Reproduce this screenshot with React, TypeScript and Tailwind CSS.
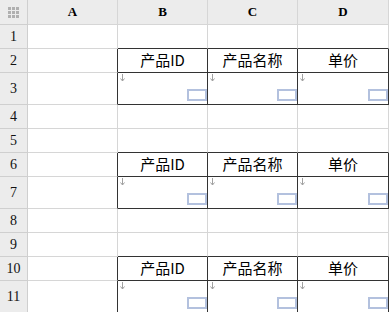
import React from 'react'

const columns = ['A', 'B', 'C', 'D']
const colWidths = ['w-[90px]', 'w-[90px]', 'w-[90px]', 'w-[91px]']
const headers = ['产品ID', '产品名称', '单价']

// row kind: 'blank' | 'head' | 'body'
const rows: { n: number; kind: 'blank' | 'head' | 'body' }[] = [
  { n: 1, kind: 'blank' },
  { n: 2, kind: 'head' },
  { n: 3, kind: 'body' },
  { n: 4, kind: 'blank' },
  { n: 5, kind: 'blank' },
  { n: 6, kind: 'head' },
  { n: 7, kind: 'body' },
  { n: 8, kind: 'blank' },
  { n: 9, kind: 'blank' },
  { n: 10, kind: 'head' },
  { n: 11, kind: 'body' },
]

function CornerIcon() {
  return (
    <svg width="11" height="11" viewBox="0 0 11 11">
      {[0, 4, 8].map((y) =>
        [0, 4, 8].map((x) => (
          <rect key={`${x}-${y}`} x={x} y={y} width="3" height="3" fill="#b0b0b0" />
        ))
      )}
    </svg>
  )
}

function DownArrow() {
  return (
    <svg width="7" height="8" viewBox="0 0 7 8" className="absolute left-[1px] top-[1px]">
      <path d="M3.5 0 V7 M1.5 4.5 L3.5 7 L5.5 4.5" stroke="#a0a0a0" strokeWidth="1" fill="none" />
    </svg>
  )
}

export default function App() {
  return (
    <div
      className="h-[312px] w-[389px] overflow-hidden bg-white"
      style={{ fontFamily: '"Liberation Serif", "Noto Sans CJK SC", serif' }}
    >
      {/* column header */}
      <div className="flex h-[25px] bg-[#ececec]">
        <div className="flex w-[28px] items-center justify-center border-r border-b border-[#cfcfcf]">
          <CornerIcon />
        </div>
        {columns.map((c, i) => (
          <div
            key={c}
            className={`${colWidths[i]} flex items-center justify-center border-r border-b border-[#d6d6d6] text-[13px] font-bold text-black`}
          >
            {c}
          </div>
        ))}
      </div>

      {rows.map((row, ri) => {
        const next = rows[ri + 1]
        const nextIsHead = next?.kind === 'head'
        const inTable = row.kind !== 'blank'
        const h = row.kind === 'body' ? 'h-[32px]' : 'h-[24px]'
        return (
          <div key={row.n} className={`flex ${h}`}>
            <div className="flex w-[28px] items-center justify-center border-r border-b border-[#cfcfcf] bg-[#ececec] text-[14px] text-[#111]">
              {row.n}
            </div>
            {/* column A */}
            <div
              className={`w-[90px] border-b border-[#d6d6d6] border-r ${
                inTable ? 'border-r-[#333]' : ''
              }`}
            />
            {headers.map((label, ci) => {
              const bottomDark = inTable || nextIsHead
              const rightDark = inTable
              return (
                <div
                  key={label}
                  className={`relative ${colWidths[ci + 1]} border-r border-b border-[#d6d6d6] ${
                    bottomDark ? 'border-b-[#333]' : ''
                  } ${rightDark ? 'border-r-[#333]' : ''} flex items-center justify-center`}
                >
                  {row.kind === 'head' && (
                    <span
                      className="text-[15px] text-black"
                      style={{ fontFamily: '"Noto Sans CJK SC", sans-serif' }}
                    >
                      {label}
                    </span>
                  )}
                  {row.kind === 'body' && (
                    <>
                      <DownArrow />
                      <div className="absolute right-0 bottom-[3px] h-[12px] w-[20px] border-2 border-[#b3c1de] bg-white" />
                    </>
                  )}
                </div>
              )
            })}
          </div>
        )
      })}
    </div>
  )
}
